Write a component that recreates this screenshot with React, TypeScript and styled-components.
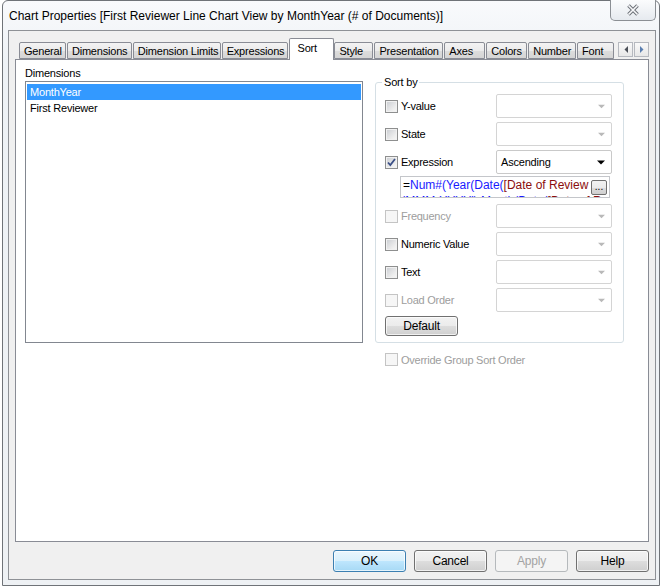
import styled, { createGlobalStyle } from "styled-components";

const GlobalStyle = createGlobalStyle`
  html, body {
    margin: 0;
    padding: 0;
    background: #ffffff;
  }
  body {
    font-family: "Liberation Sans", Arial, sans-serif;
    font-size: 11px;
    color: #000000;
  }
  *, *::before, *::after {
    box-sizing: border-box;
  }
`;

const Window = styled.div`
  width: 658px;
  height: 586px;
  margin-left: 2px;
  display: flex;
  flex-direction: column;
  border: 1px solid #6f7378;
  border-radius: 6px 6px 0 0;
  background: linear-gradient(#f9fafc, #eef2f6 60px, #eef1f4);
  padding: 0 3px 5px 5px;
`;

const TitleBar = styled.div`
  display: flex;
  align-items: flex-start;
  height: 29px;
  flex-shrink: 0;
`;

const Title = styled.div`
  flex: 1;
  font-size: 12px;
  line-height: 30px;
  padding-left: 1px;
  white-space: nowrap;
`;

const CloseButton = styled.div`
  width: 46px;
  height: 21px;
  margin-top: -1px;
  display: flex;
  align-items: center;
  justify-content: center;
  border: 1px solid #8b8f94;
  border-top: none;
  border-radius: 0 0 5px 5px;
  background: linear-gradient(#fbfcfd, #e6eaef);
`;

const Client = styled.div`
  flex: 1;
  display: flex;
  flex-direction: column;
  border: 1px solid #8e9196;
  background: #f0f0f0;
  padding: 7px 6px 7px 6px;
`;

const TabStrip = styled.div`
  display: flex;
  align-items: flex-end;
  height: 21px;
  padding-left: 4px;
  flex-shrink: 0;
`;

const Tab = styled.div<{ $w: number; $active?: boolean }>`
  width: ${(p) => p.$w}px;
  height: ${(p) => (p.$active ? 22 : 17)}px;
  margin-right: ${(p) => (p.$active ? 0 : 1)}px;
  margin-bottom: ${(p) => (p.$active ? -1 : 0)}px;
  padding-left: ${(p) => (p.$active ? 8 : 4)}px;
  padding-bottom: ${(p) => (p.$active ? 3 : 0)}px;
  display: flex;
  align-items: center;
  white-space: nowrap;
  letter-spacing: -0.2px;
  border: 1px solid #898c95;
  border-bottom: ${(p) => (p.$active ? "none" : "1px solid #898c95")};
  border-radius: 2px 2px 0 0;
  background: ${(p) =>
    p.$active ? "#ffffff" : "linear-gradient(#f3f3f3, #ebebeb 50%, #dddddd 51%, #d5d5d5)"};
  position: relative;
  z-index: ${(p) => (p.$active ? 1 : 0)};
`;

const TabScroller = styled.div`
  display: flex;
  gap: 1px;
  margin-left: 3px;
  margin-bottom: 2px;
`;

const ScrollButton = styled.div`
  width: 15px;
  height: 15px;
  display: flex;
  align-items: center;
  justify-content: center;
  border: 1px solid #b6b9bf;
  background: linear-gradient(#fafafa, #e7e7e7);
`;

const Page = styled.div`
  flex: 1;
  display: flex;
  gap: 12px;
  background: #ffffff;
  border: 1px solid #898c95;
  padding: 7px 9px;
`;

const LeftColumn = styled.div`
  width: 338px;
  display: flex;
  flex-direction: column;
`;

const Caption = styled.div`
  line-height: 13px;
  margin-bottom: 1px;
  letter-spacing: -0.2px;
`;

const ListBox = styled.div`
  height: 262px;
  border: 1px solid #828790;
  padding: 2px 1px;
`;

const ListItem = styled.div<{ $selected?: boolean }>`
  height: 16px;
  line-height: 16px;
  padding-left: 3px;
  letter-spacing: -0.2px;
  background: ${(p) => (p.$selected ? "#3399ff" : "transparent")};
  color: ${(p) => (p.$selected ? "#ffffff" : "#000000")};
`;

const RightColumn = styled.div`
  width: 249px;
  display: flex;
  flex-direction: column;
  padding-top: 9px;
`;

const GroupBox = styled.fieldset`
  margin: 0;
  min-width: 0;
  border: 1px solid #d5dfe5;
  border-radius: 3px;
  padding: 5px 11px 6px 9px;
`;

const Legend = styled.legend`
  padding: 0 2px;
  margin-left: -3px;
  line-height: 13px;
  letter-spacing: -0.2px;
`;

const SortList = styled.div`
  display: flex;
  flex-direction: column;
  gap: 4px;
`;

const SortRow = styled.div`
  display: grid;
  grid-template-columns: 111px 116px;
  align-items: center;
  height: 24px;
`;

const CheckLabel = styled.label<{ $disabled?: boolean }>`
  display: flex;
  align-items: center;
  gap: 3px;
  white-space: nowrap;
  letter-spacing: -0.25px;
  color: ${(p) => (p.$disabled ? "#9d9d9d" : "#000000")};
`;

const CheckBox = styled.span<{ $disabled?: boolean }>`
  width: 13px;
  height: 13px;
  flex-shrink: 0;
  display: flex;
  align-items: center;
  justify-content: center;
  border: 1px solid ${(p) => (p.$disabled ? "#c4c4c4" : "#8e8f8f")};
  background: ${(p) =>
    p.$disabled ? "#f6f6f6" : "linear-gradient(135deg, #c9ccd1, #eeeeee 70%, #f7f7f7)"};
  box-shadow: inset 0 0 0 1px ${(p) => (p.$disabled ? "#f6f6f6" : "#f1f1f1")};
`;

const Combo = styled.div<{ $enabled?: boolean }>`
  height: 24px;
  display: flex;
  align-items: center;
  justify-content: space-between;
  padding: 0 6px 0 4px;
  border: 1px solid ${(p) => (p.$enabled ? "#c9c9c9" : "#d4d4d4")};
  border-radius: 2px;
  background: #ffffff;
  letter-spacing: -0.2px;
`;

const ExprBox = styled.div`
  position: relative;
  margin: -2px 0 2px 15px;
  width: 210px;
  height: 22px;
  overflow: hidden;
  border: 1px solid #c4c6ca;
  background: #ffffff;
  padding: 0 0 0 2px;
  line-height: 16px;
  font-size: 12px;
  white-space: nowrap;
`;

const Token = styled.span<{ $c: string }>`
  color: ${(p) => p.$c};
`;

const DotsButton = styled.div`
  position: absolute;
  top: 3px;
  right: 2px;
  width: 16px;
  height: 15px;
  display: flex;
  align-items: flex-end;
  justify-content: center;
  padding-bottom: 3px;
  font-size: 10px;
  line-height: 8px;
  color: #000000;
  border: 1px solid #707070;
  border-radius: 2px;
  background: linear-gradient(#f2f2f2, #ebebeb 50%, #dddddd 51%, #cfcfcf);
`;

const PushButton = styled.div<{ $kind?: "default" | "disabled" | "focus"; $w?: number }>`
  width: ${(p) => p.$w ?? 73}px;
  height: ${(p) => (p.$kind === "default" ? 20 : 22)}px;
  display: flex;
  align-items: center;
  justify-content: center;
  font-size: 12px;
  letter-spacing: -0.2px;
  border-radius: 3px;
  border: 1px solid
    ${(p) => (p.$kind === "focus" ? "#3c7fb1" : p.$kind === "disabled" ? "#b5b9bc" : "#707070")};
  color: ${(p) => (p.$kind === "disabled" ? "#a3a3a3" : "#000000")};
  background: ${(p) =>
    p.$kind === "focus"
      ? "linear-gradient(#eaf6fd, #d9f0fc 50%, #bee6fd 51%, #a7d9f5)"
      : p.$kind === "disabled"
      ? "#f4f4f4"
      : "linear-gradient(#f2f2f2, #ebebeb 50%, #dddddd 51%, #cfcfcf)"};
  box-shadow: inset 0 0 0 1px ${(p) => (p.$kind === "disabled" ? "#f4f4f4" : "rgba(255,255,255,0.7)")};
`;

const OverrideRow = styled.div`
  margin-top: 10px;
  padding-left: 10px;
`;

const ButtonRow = styled.div`
  display: flex;
  justify-content: flex-end;
  gap: 8px;
  margin-top: 8px;
  flex-shrink: 0;
`;

const Arrow = ({ color, size = 7 }: { color: string; size?: number }) => (
  <svg width={size} height={Math.ceil(size / 2) + 1} viewBox="0 0 8 5">
    <path d="M0 0.5 H8 L4 4.5 Z" fill={color} />
  </svg>
);

const Check = () => (
  <svg width="11" height="11" viewBox="0 0 11 11">
    <path d="M2 5.5 L4.3 8 L9 2" fill="none" stroke="#3b4f86" strokeWidth="1.8" />
  </svg>
);

const CloseGlyph = () => (
  <svg width="14" height="12" viewBox="0 0 14 12">
    <path d="M2.5 1.5 L11.5 10.5 M11.5 1.5 L2.5 10.5" stroke="#6d7178" strokeWidth="3.6" />
    <path d="M2.5 1.5 L11.5 10.5 M11.5 1.5 L2.5 10.5" stroke="#f8f9fb" strokeWidth="1.6" />
  </svg>
);

const tabs = [
  { label: "General", w: 47 },
  { label: "Dimensions", w: 65 },
  { label: "Dimension Limits", w: 88 },
  { label: "Expressions", w: 66 },
  { label: "Sort", w: 46, active: true },
  { label: "Style", w: 39 },
  { label: "Presentation", w: 69 },
  { label: "Axes", w: 41 },
  { label: "Colors", w: 41 },
  { label: "Number", w: 48 },
  { label: "Font", w: 37 },
];

type SortOption = {
  label: string;
  disabled?: boolean;
  checked?: boolean;
  value?: string;
};

const sortOptions: SortOption[] = [
  { label: "Y-value" },
  { label: "State" },
  { label: "Expression", checked: true, value: "Ascending" },
  { label: "Frequency", disabled: true },
  { label: "Numeric Value" },
  { label: "Text" },
  { label: "Load Order", disabled: true },
];

const renderRow = (o: SortOption) => (
  <SortRow key={o.label}>
    <CheckLabel $disabled={o.disabled}>
      <CheckBox $disabled={o.disabled}>{o.checked && <Check />}</CheckBox>
      {o.label}
    </CheckLabel>
    <Combo $enabled={!!o.value}>
      <span>{o.value}</span>
      {o.value ? <Arrow color="#000000" size={8} /> : <Arrow color="#b9b9b9" size={7} />}
    </Combo>
  </SortRow>
);

const App = () => {
  return (
    <>
      <GlobalStyle />
      <Window>
        <TitleBar>
          <Title>Chart Properties [First Reviewer Line Chart View by MonthYear (# of Documents)]</Title>
          <CloseButton>
            <CloseGlyph />
          </CloseButton>
        </TitleBar>
        <Client>
          <TabStrip>
            {tabs.map((t) => (
              <Tab key={t.label} $w={t.w} $active={t.active}>
                {t.label}
              </Tab>
            ))}
            <TabScroller>
              <ScrollButton>
                <svg width="4" height="7" viewBox="0 0 4 7">
                  <path d="M4 0 V7 L0.5 3.5 Z" fill="#4a4f57" />
                </svg>
              </ScrollButton>
              <ScrollButton>
                <svg width="4" height="7" viewBox="0 0 4 7">
                  <path d="M0 0 V7 L3.5 3.5 Z" fill="#5b7fb0" />
                </svg>
              </ScrollButton>
            </TabScroller>
          </TabStrip>
          <Page>
            <LeftColumn>
              <Caption>Dimensions</Caption>
              <ListBox>
                <ListItem $selected>MonthYear</ListItem>
                <ListItem>First Reviewer</ListItem>
              </ListBox>
            </LeftColumn>
            <RightColumn>
              <GroupBox>
                <Legend>Sort by</Legend>
                <SortList>
                  {sortOptions.slice(0, 3).map(renderRow)}
                  <ExprBox>
                    <div>
                      <Token $c="#000000">=</Token>
                      <Token $c="#1a1aff">Num#(Year(Date(</Token>
                      <Token $c="#8b0d0d">[Date of Review</Token>
                    </div>
                    <div>
                      <Token $c="#1a1aff">'MMM-YYYY'),Month(Date(</Token>
                      <Token $c="#8b0d0d">[Date of Review</Token>
                    </div>
                    <DotsButton>...</DotsButton>
                  </ExprBox>
                  {sortOptions.slice(3).map(renderRow)}
                  <PushButton $kind="default">Default</PushButton>
                </SortList>
              </GroupBox>
              <OverrideRow>
                <CheckLabel $disabled>
                  <CheckBox $disabled />
                  Override Group Sort Order
                </CheckLabel>
              </OverrideRow>
            </RightColumn>
          </Page>
          <ButtonRow>
            <PushButton $kind="focus">OK</PushButton>
            <PushButton>Cancel</PushButton>
            <PushButton $kind="disabled">Apply</PushButton>
            <PushButton>Help</PushButton>
          </ButtonRow>
        </Client>
      </Window>
    </>
  );
};

export default App;
